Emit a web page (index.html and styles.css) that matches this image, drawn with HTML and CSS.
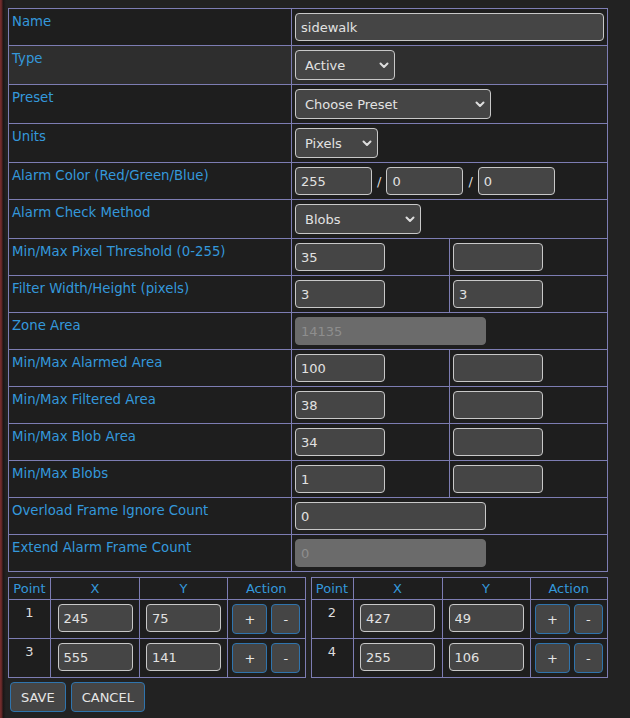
FILE: index.html
```html
<!DOCTYPE html>
<html>
<head>
<meta charset="utf-8">
<title>Zone</title>
<link rel="stylesheet" href="styles.css">
</head>
<body>
<table class="zone-table">
  <colgroup><col class="c-label"><col class="c-val"><col class="c-val"></colgroup>
  <tr><td class="lbl">Name</td><td colspan="2"><input class="inp full" type="text" value="sidewalk"></td></tr>
  <tr class="hl"><td class="lbl">Type</td><td colspan="2"><select class="sel w-type"><option>Active</option></select></td></tr>
  <tr><td class="lbl">Preset</td><td colspan="2"><select class="sel w-preset"><option>Choose Preset</option></select></td></tr>
  <tr><td class="lbl">Units</td><td colspan="2"><select class="sel w-units"><option>Pixels</option></select></td></tr>
  <tr><td class="lbl">Alarm Color (Red/Green/Blue)</td><td colspan="2"><div class="rgb"><input class="inp w-rgb" type="text" value="255"><span class="slash">/</span><input class="inp w-rgb" type="text" value="0"><span class="slash">/</span><input class="inp w-rgb" type="text" value="0"></div></td></tr>
  <tr><td class="lbl">Alarm Check Method</td><td colspan="2"><select class="sel w-blobs"><option>Blobs</option></select></td></tr>
  <tr><td class="lbl">Min/Max Pixel Threshold (0-255)</td><td><input class="inp w-half" type="text" value="35"></td><td><input class="inp w-half" type="text" value=""></td></tr>
  <tr><td class="lbl">Filter Width/Height (pixels)</td><td><input class="inp w-half" type="text" value="3"></td><td><input class="inp w-half" type="text" value="3"></td></tr>
  <tr><td class="lbl">Zone Area</td><td colspan="2"><input class="inp w-wide" type="text" value="14135" disabled></td></tr>
  <tr><td class="lbl">Min/Max Alarmed Area</td><td><input class="inp w-half" type="text" value="100"></td><td><input class="inp w-half" type="text" value=""></td></tr>
  <tr><td class="lbl">Min/Max Filtered Area</td><td><input class="inp w-half" type="text" value="38"></td><td><input class="inp w-half" type="text" value=""></td></tr>
  <tr><td class="lbl">Min/Max Blob Area</td><td><input class="inp w-half" type="text" value="34"></td><td><input class="inp w-half" type="text" value=""></td></tr>
  <tr><td class="lbl">Min/Max Blobs</td><td><input class="inp w-half" type="text" value="1"></td><td><input class="inp w-half" type="text" value=""></td></tr>
  <tr><td class="lbl">Overload Frame Ignore Count</td><td colspan="2"><input class="inp w-wide" type="text" value="0"></td></tr>
  <tr><td class="lbl">Extend Alarm Frame Count</td><td colspan="2"><input class="inp w-wide" type="text" value="0" disabled></td></tr>
</table>

<div class="points">
  <table class="pts">
    <colgroup><col class="p-num"><col class="p-x"><col class="p-y"><col class="p-act"></colgroup>
    <tr><th>Point</th><th>X</th><th>Y</th><th>Action</th></tr>
    <tr><td class="num">1</td><td><input class="inp w-pt" type="text" value="245"></td><td><input class="inp w-pt" type="text" value="75"></td><td><button class="btn pm">+</button> <button class="btn pm">-</button></td></tr>
    <tr><td class="num">3</td><td><input class="inp w-pt" type="text" value="555"></td><td><input class="inp w-pt" type="text" value="141"></td><td><button class="btn pm">+</button> <button class="btn pm">-</button></td></tr>
  </table>
  <table class="pts">
    <colgroup><col class="p-num"><col class="p-x"><col class="p-y"><col class="p-act"></colgroup>
    <tr><th>Point</th><th>X</th><th>Y</th><th>Action</th></tr>
    <tr><td class="num">2</td><td><input class="inp w-pt" type="text" value="427"></td><td><input class="inp w-pt" type="text" value="49"></td><td><button class="btn pm">+</button> <button class="btn pm">-</button></td></tr>
    <tr><td class="num">4</td><td><input class="inp w-pt" type="text" value="255"></td><td><input class="inp w-pt" type="text" value="106"></td><td><button class="btn pm">+</button> <button class="btn pm">-</button></td></tr>
  </table>
</div>

<div class="actions">
  <button class="btn big">SAVE</button>
  <button class="btn big">CANCEL</button>
</div>
</body>
</html>
```

FILE: styles.css
```css
html {
  background: linear-gradient(to right, #7a2f2f 0, #5a2424 2px, #1b1515 3px, #222 6px);
  min-height: 100%;
}
body {
  margin: 8px;
  font-family: "DejaVu Sans", Verdana, sans-serif;
  font-size: 13px;
  line-height: 17px;
  color: #ddd;
}
.zone-table {
  width: 600px;
  table-layout: fixed;
  border-collapse: collapse;
  background: #1e1e1e;
}
.c-label { width: 283px; }
.c-val { width: 158px; }
.zone-table td {
  border: 1px solid #7d7db3;
  padding: 4px 3px;
  vertical-align: top;
}
.zone-table tr.hl td { background: #2e2e2e; }
.lbl { color: #3498db; font-size: 13.3px; }

.inp {
  display: block;
  box-sizing: border-box;
  height: 28px;
  margin: 0;
  padding: 0 5px;
  background: #454545;
  color: #e2e2e2;
  border: 1px solid #c8c8c8;
  border-radius: 4px;
  font: inherit;
  outline: none;
}
.inp:disabled {
  background: #6b6b6b;
  border-color: #6b6b6b;
  color: #8e8e8e;
}
.full { width: 100%; }
.w-half { width: 90px; }
.w-wide { width: 191px; }
.w-rgb { width: 77px; }
.w-pt { width: 75px; margin: 0 auto; }

.rgb { display: flex; align-items: center; gap: 5px; }
.slash { color: #ddd; }

.sel {
  display: block;
  box-sizing: border-box;
  height: 30px;
  margin: 0;
  padding: 0 20px 0 9px;
  background-color: #454545;
  background-image: url("data:image/svg+xml,%3Csvg xmlns='http://www.w3.org/2000/svg' width='10' height='7' viewBox='0 0 10 7'%3E%3Cpath d='M1.5 1.5 L5 5 L8.5 1.5' fill='none' stroke='%23dddddd' stroke-width='2' stroke-linecap='round' stroke-linejoin='round'/%3E%3C/svg%3E");
  background-repeat: no-repeat;
  background-position: right 5px center;
  background-size: 10px 7px;
  color: #e2e2e2;
  border: 1px solid #c8c8c8;
  border-radius: 4px;
  font: inherit;
  appearance: none;
  -webkit-appearance: none;
  outline: none;
}
.w-type { width: 100px; }
.w-preset { width: 196px; }
.w-units { width: 83px; }
.w-blobs { width: 126px; }

.points {
  display: flex;
  gap: 5px;
  width: 600px;
  margin-top: 5px;
}
.pts {
  flex: 1;
  table-layout: fixed;
  border-collapse: collapse;
  background: #1e1e1e;
}
.p-num { width: 42px; }
.p-x { width: 89px; }
.p-y { width: 88px; }
.pts th, .pts td {
  border: 1px solid #7d7db3;
  text-align: center;
  vertical-align: top;
}
.pts th {
  color: #3498db;
  font-weight: normal;
  padding: 2px 3px;
}
.pts td {
  padding: 4px 3px 4px;
}
.pts td.num { color: #ddd; }

.btn {
  box-sizing: border-box;
  height: 30px;
  margin: 0;
  background: #454545;
  color: #e6e6e6;
  border: 1px solid #2f74ad;
  border-radius: 4px;
  font: inherit;
  vertical-align: top;
  cursor: pointer;
}
.pm { padding: 0 11px; }
.big { padding: 0 10px; }

.actions {
  display: flex;
  gap: 5px;
  margin-top: 4px;
  padding-left: 2px;
}
```
